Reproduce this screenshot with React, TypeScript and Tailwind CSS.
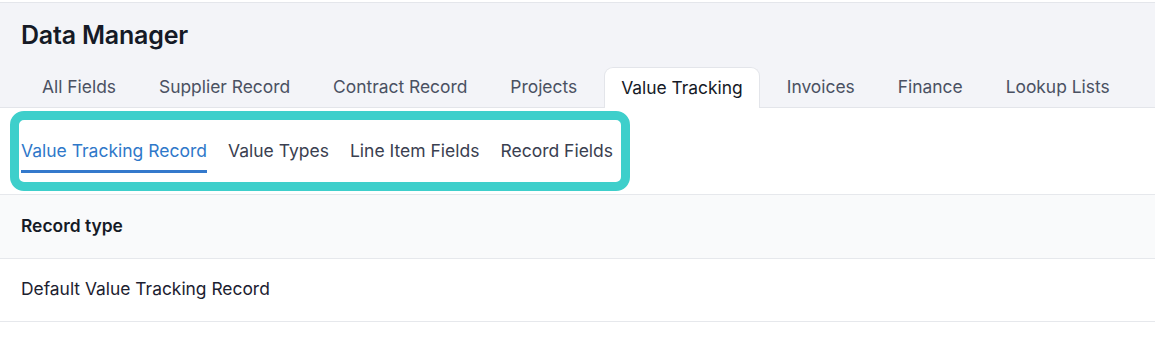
import React from "react";

const TABS = [
  "All Fields",
  "Supplier Record",
  "Contract Record",
  "Projects",
  "Value Tracking",
  "Invoices",
  "Finance",
  "Lookup Lists",
];

const SUB_TABS = [
  "Value Tracking Record",
  "Value Types",
  "Line Item Fields",
  "Record Fields",
];

export default function App() {
  const activeTab = "Value Tracking";
  const activeSub = "Value Tracking Record";

  return (
    <div
      className="w-[1155px] h-[345px] bg-white overflow-hidden text-[#1f2430]"
      style={{ fontFamily: "Inter, 'Noto Sans', sans-serif" }}
    >
      <header className="mt-[2px] bg-[#f3f4f8] border-t border-[#e4e6eb] border-b border-b-[#e3e5ea]">
        <h1 className="px-[21px] pt-[16px] text-[25px] leading-[32px] font-semibold text-[#151a26] tracking-[-0.2px]">
          Data Manager
        </h1>
        <nav className="flex items-end gap-[11px] pl-[26px] pt-[16px] -mb-px">
          {TABS.map((tab) => {
            const active = tab === activeTab;
            return (
              <div
                key={tab}
                className={
                  active
                    ? "h-[41px] px-4 flex items-center whitespace-nowrap bg-white border border-b-0 border-[#e3e5ea] rounded-t-[9px] text-[17.4px] text-[#151a26]"
                    : "h-[41px] px-4 flex items-center whitespace-nowrap text-[17.4px] text-[#4a5162]"
                }
              >
                {tab}
              </div>
            );
          })}
        </nav>
      </header>

      <section className="relative h-[87px] border-b border-[#e6e8ec]">
        <div className="flex gap-[21px] pl-[21px] pt-[31px]">
          {SUB_TABS.map((sub) => {
            const active = sub === activeSub;
            return (
              <div
                key={sub}
                className={
                  active
                    ? "pb-[7px] whitespace-nowrap border-b-[3px] border-[#3479cc] text-[17.5px] leading-[24px] text-[#2f78c9]"
                    : "pb-[7px] whitespace-nowrap border-b-[3px] border-transparent text-[17.5px] leading-[24px] text-[#3a4050]"
                }
              >
                {sub}
              </div>
            );
          })}
        </div>
        {/* highlight annotation */}
        <div className="absolute left-[10px] top-[3px] w-[620px] h-[80px] border-[9px] border-[#3ecfcb] rounded-[14px] pointer-events-none" />
      </section>

      <table className="w-full border-collapse">
        <thead>
          <tr className="bg-[#f9fafb] border-b border-[#e6e8ec]">
            <th className="h-[63px] px-[21px] text-left text-[17.4px] font-semibold text-[#151a26]">
              Record type
            </th>
          </tr>
        </thead>
        <tbody>
          <tr className="border-b border-[#e6e8ec]">
            <td className="h-[63px] px-[21px] text-left text-[17.4px] text-[#1c2130]">
              Default Value Tracking Record
            </td>
          </tr>
        </tbody>
      </table>
    </div>
  );
}
